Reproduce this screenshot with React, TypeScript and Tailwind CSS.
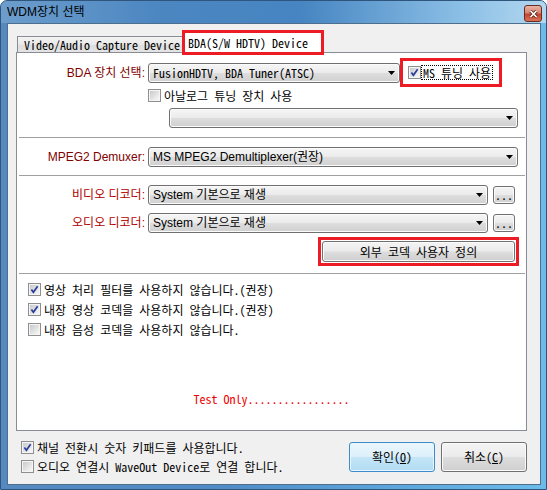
import React, { useId } from "react";

const sans = "[font-family:'Liberation_Sans','Noto_Sans_CJK_KR',sans-serif]";
const mono = "[font-family:'Noto_Sans_Mono_CJK_KR','Liberation_Mono','Noto_Sans_CJK_KR',monospace]";

const CheckBox = ({ checked }: { checked?: boolean }) => {
  const id = "cb" + useId().replace(/[^a-zA-Z0-9]/g, "");
  return (
    <svg width="13" height="13" viewBox="0 0 13 13" className="shrink-0">
      <defs>
        <linearGradient id={id} x1="0" y1="0" x2="1" y2="1">
          <stop offset="0" stopColor="#c9cacb" />
          <stop offset="1" stopColor="#f8f8f8" />
        </linearGradient>
      </defs>
      <rect x="0.5" y="0.5" width="12" height="12" fill="#f5f5f5" stroke="#8f8f8f" />
      <rect x="2" y="2" width="9" height="9" fill={`url(#${id})`} />
      {checked && (
        <path d="M3.4 6.6 L5.4 9.3 L9.6 3.2" fill="none" stroke="#2a3d9d" strokeWidth="1.7" />
      )}
    </svg>
  );
};

const Arrow = () => (
  <svg width="7" height="4" viewBox="0 0 7 4" className="shrink-0">
    <path d="M0 0H7L3.5 4Z" fill="#000" />
  </svg>
);

const Combo = ({ className, text, isMono }: { className: string; text?: string; isMono?: boolean }) => (
  <div
    className={`flex h-[20px] shrink-0 items-center justify-between rounded-[3px] border border-[#707070] bg-[linear-gradient(to_bottom,#f6f6f6,#ebebeb_48%,#dddddd_52%,#d0d0d0)] pl-[4px] pr-[4px] shadow-[inset_0_0_0_1px_#fbfbfb] ${className}`}
  >
    <span className={`whitespace-nowrap text-[12px] leading-[14px] ${isMono ? mono : sans}`}>{text}</span>
    <Arrow />
  </div>
);

const Button = ({ className, children, primary }: { className: string; children: React.ReactNode; primary?: boolean }) => (
  <div
    className={`flex items-center justify-center rounded-[3px] border ${
      primary
        ? "border-[#3c8ccb] bg-[linear-gradient(to_bottom,#ebf6fc,#dcf0fb_48%,#c4e5f7_52%,#b2dbf2)] shadow-[inset_0_0_0_1px_#e8f7ff]"
        : "border-[#707070] bg-[linear-gradient(to_bottom,#f4f4f4,#ebebeb_48%,#dddddd_52%,#cfcfcf)] shadow-[inset_0_0_0_1px_#fbfbfb]"
    } ${mono} whitespace-nowrap text-[12px] leading-[14px] ${className}`}
  >
    {children}
  </div>
);

const Label = ({ children, dark }: { children: React.ReactNode; dark?: boolean }) => (
  <span
    className={`mr-[3px] w-[128px] shrink-0 whitespace-nowrap text-right text-[12px] leading-[14px] ${
      dark ? "text-[#800000]" : "text-[#b00000]"
    }`}
  >
    {children}
  </span>
);

const CheckRow = ({ checked, children, className }: { checked?: boolean; children: React.ReactNode; className: string }) => (
  <div className={`flex h-[13px] items-center ${className}`}>
    <CheckBox checked={checked} />
    <span className={`ml-[3px] whitespace-nowrap text-[12px] leading-[14px] ${mono}`}>{children}</span>
  </div>
);

export default function App() {
  return (
    <div
      className={`${sans} flex h-[490px] w-[547px] flex-col overflow-hidden rounded-t-[7px] border border-[#2f557d] bg-[linear-gradient(to_right,#5589c0,#4f8bc6_40%,#5ea7dc_75%,#6cbbe9)] text-black`}
    >
      {/* title bar */}
      <div className="flex h-[22px] shrink-0 justify-between bg-[linear-gradient(to_right,#6c9dcc,#4b86c1_30%,#4685c2_55%,#8cc0e6_85%,#b3d7ef)] pl-[6px] pr-[4px]">
        <span className="self-center text-[12px] leading-[14px]">WDM장치 선택</span>
        <div className="mt-[4px] flex h-[17px] w-[18px] items-center justify-center rounded-[3px] border border-[#6b2a22] bg-[linear-gradient(to_bottom,#eab2a4,#d88673_45%,#c2462f_55%,#d77256)]">
          <svg width="9" height="8" viewBox="0 0 9 8">
            <path d="M1.5 1 L7.5 7 M7.5 1 L1.5 7" stroke="#5b2319" strokeWidth="3.2" />
            <path d="M1.5 1 L7.5 7 M7.5 1 L1.5 7" stroke="#ffffff" strokeWidth="1.7" />
          </svg>
        </div>
      </div>

      {/* client area */}
      <div className="mb-[4px] ml-[6px] mr-[5px] flex flex-1 flex-col border border-[#4e6e8e] bg-[#f0f0f0] pl-[8px] pt-[12px]">
        {/* tabs */}
        <div className="flex h-[16px] items-end">
          <div
            className={`${mono} ml-[1px] flex h-[16px] w-[168px] items-center border border-b-0 border-[#898c95] bg-[linear-gradient(to_bottom,#f4f4f4,#e9e9e9_50%,#dedede_51%,#e4e4e4)] pl-[6px] text-[12px] leading-[14px]`}
          >
            Video/Audio Capture Device
          </div>
          <div
            className={`${mono} relative z-10 -mb-[3px] -ml-[3px] flex h-[25px] w-[142px] items-center border-[3px] border-[#ed1c24] bg-white pl-[3px] text-[12px] leading-[14px]`}
          >
            BDA(S/W HDTV) Device
          </div>
        </div>

        {/* tab page */}
        <div className="flex h-[379px] w-[511px] flex-col border border-[#898c95] bg-white pt-[5px]">
          <div className="flex h-[29px] items-center">
            <Label dark>BDA 장치 선택:</Label>
            <Combo className="w-[252px]" isMono text="FusionHDTV, BDA Tuner(ATSC)" />
            <div className="flex h-[29px] w-[102px] shrink-0 items-center border-[3px] border-[#ed1c24] pl-[5px]">
              <CheckBox checked />
              <span className={`${mono} border border-dotted border-black px-[1px] text-[12px] leading-[13px] whitespace-nowrap`}>
                MS 튜닝 사용
              </span>
            </div>
          </div>

          <CheckRow className="ml-[131px] mt-[2px]">아날로그 튜닝 장치 사용</CheckRow>

          <Combo className="ml-[152px] mt-[6px] w-[349px]" />

          <div className="ml-[2px] mt-[9px] h-px w-[506px] bg-[#a0a0a0]" />

          <div className="mt-[9px] flex h-[20px] items-center">
            <Label dark>MPEG2 Demuxer:</Label>
            <Combo className="w-[370px]" text="MS MPEG2 Demultiplexer(권장)" />
          </div>

          <div className="ml-[2px] mt-[8px] h-px w-[506px] bg-[#a0a0a0]" />

          <div className="mt-[9px] flex h-[20px] items-center">
            <Label>비디오 디코더:</Label>
            <Combo className="w-[340px]" text="System 기본으로 재생" />
            <Button className="ml-[5px] h-[18px] w-[22px]">...</Button>
          </div>

          <div className="mt-[8px] flex h-[20px] items-center">
            <Label>오디오 디코더:</Label>
            <Combo className="w-[340px]" text="System 기본으로 재생" />
            <Button className="ml-[5px] h-[18px] w-[22px]">...</Button>
          </div>

          <div className="ml-[301px] mt-[4px] flex h-[29px] w-[201px] border-[3px] border-[#ed1c24] p-[1px]">
            <Button className="h-full w-full">외부 코덱 사용자 정의</Button>
          </div>

          <div className="ml-[2px] mt-[7px] h-px w-[506px] bg-[#a0a0a0]" />

          <div className="ml-[11px] mt-[9px] flex flex-col gap-[7px]">
            <CheckRow checked className="">영상 처리 필터를 사용하지 않습니다.(권장)</CheckRow>
            <CheckRow checked className="">내장 영상 코덱을 사용하지 않습니다.(권장)</CheckRow>
            <CheckRow className="">내장 음성 코덱을 사용하지 않습니다.</CheckRow>
          </div>

          <div className={`${mono} mt-[56px] text-center text-[12px] leading-[14px] text-[#ee0000]`}>
            Test Only.................
          </div>
        </div>

        {/* bottom row */}
        <div className="flex w-[511px] justify-between">
          <div className="flex flex-col gap-[6px] pl-[5px] pt-[10px]">
            <CheckRow checked className="">채널 전환시 숫자 키패드를 사용합니다.</CheckRow>
            <CheckRow className="">오디오 연결시 WaveOut Device로 연결 합니다.</CheckRow>
          </div>
          <div className="flex gap-[6px] pt-[11px]">
            <Button primary className="h-[30px] w-[86px]">
              확인(<span className="underline">O</span>)
            </Button>
            <Button className="h-[30px] w-[86px]">
              취소(<span className="underline">C</span>)
            </Button>
          </div>
        </div>
      </div>
    </div>
  );
}
